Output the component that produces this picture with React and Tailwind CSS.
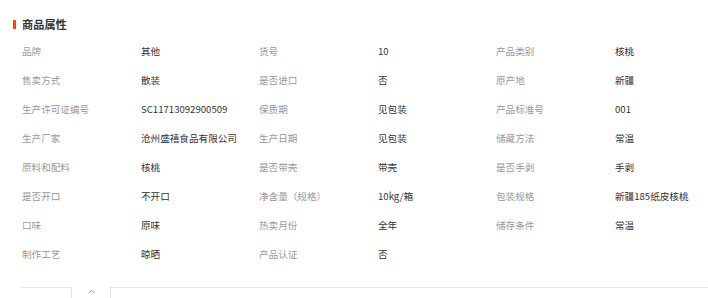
const attrs = [
  ['品牌', '其他'],
  ['货号', '10'],
  ['产品类别', '核桃'],
  ['售卖方式', '散装'],
  ['是否进口', '否'],
  ['原产地', '新疆'],
  ['生产许可证编号', 'SC11713092900509'],
  ['保质期', '见包装'],
  ['产品标准号', '001'],
  ['生产厂家', '沧州盛禧食品有限公司'],
  ['生产日期', '见包装'],
  ['储藏方法', '常温'],
  ['原料和配料', '核桃'],
  ['是否带壳', '带壳'],
  ['是否手剥', '手剥'],
  ['是否开口', '不开口'],
  ['净含量（规格）', '10kg/箱'],
  ['包装规格', '新疆185纸皮核桃'],
  ['口味', '原味'],
  ['热卖月份', '全年'],
  ['储存条件', '常温'],
  ['制作工艺', '晾晒'],
  ['产品认证', '否'],
];

export default function App() {
  return (
    <div
      className="w-[708px] h-[298px] overflow-hidden bg-white pl-[13px] pt-[17px]"
      style={{ fontFamily: '"Noto Sans CJK SC", "Noto Sans", sans-serif' }}
    >
      {/* Section title */}
      <div className="flex items-center h-[14px]">
        <span className="w-[3px] h-[9px] bg-[#ff4400] mr-[6px]"></span>
        <span className="text-[11.2px] font-bold text-[#333] leading-[14px]">商品属性</span>
      </div>

      {/* Attribute grid */}
      <div className="grid grid-cols-[237px_237px_237px] pl-[9px] mt-[6px]">
        {attrs.map(([label, value]) => (
          <div key={label} className="flex h-[29px] items-center text-[9.6px] whitespace-nowrap">
            <span className="w-[119px] text-[#999]">{label}</span>
            <span className="text-[#333]">{value}</span>
          </div>
        ))}
      </div>

      {/* Bottom tab strip */}
      <div className="flex mt-[18px] ml-[8px] h-[20px]">
        <div className="w-[50px] border-t border-[#e5e5e5]"></div>
        <div className="w-[40px] border-l border-r border-[#e5e5e5] flex justify-center pt-[2px]">
          <svg width="7" height="5" viewBox="0 0 7 5" fill="none">
            <polyline points="0.8,4 3.5,1.2 6.2,4" stroke="#999" strokeWidth="1" />
          </svg>
        </div>
        <div className="flex-1 border-t border-[#e5e5e5]"></div>
      </div>
    </div>
  );
}
